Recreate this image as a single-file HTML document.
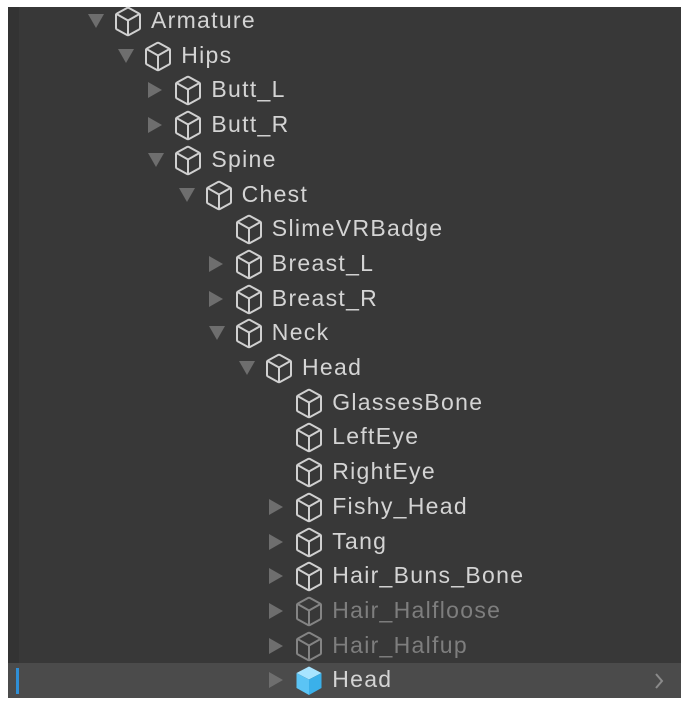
<!DOCTYPE html><html><head><style>
body{margin:0;width:681px;height:707px;background:#fff;overflow:hidden;position:relative;font-family:"Liberation Sans",sans-serif}
#p{position:absolute;left:8px;top:7px;width:673px;height:691px;background:#383838}
#c{position:absolute;left:8px;top:7px;width:11px;height:691px;background:#333}
.r{position:absolute;height:34px;left:0;width:681px}
.t{position:absolute;width:0;height:0}
.d{border-left:8px solid transparent;border-right:8px solid transparent;border-top:14px solid #6e6e6e;top:10px}
.c{border-top:8px solid transparent;border-bottom:8px solid transparent;border-left:14px solid #6e6e6e;top:9px}
svg{position:absolute;top:2px}
.l{position:absolute;top:1px;font-size:23px;letter-spacing:1.3px;color:#d4d4d4;line-height:30px}
.g .l{color:#7e7e7e}.g svg{opacity:.5}
</style></head><body><div id="p"></div><div id="c"></div>
<div style="position:absolute;top:663px;background:#4b4b4b;left:8px;width:673px;height:35px"></div>
<div style="position:absolute;left:16px;top:668px;width:3px;height:26px;background:#2f8fd6"></div>
<svg style="position:absolute;left:654px;top:672px" width="10" height="18" viewBox="0 0 10 18"><path d="M2 2 L8 9 L2 16" fill="none" stroke="#8a8a8a" stroke-width="2"/></svg>
<div id="rows"></div>
<script>
const rows=[[0,'d','Armature'],[1,'d','Hips'],[2,'c','Butt_L'],[2,'c','Butt_R'],[2,'d','Spine'],[3,'d','Chest'],[4,'','SlimeVRBadge'],[4,'c','Breast_L'],[4,'c','Breast_R'],[4,'d','Neck'],[5,'d','Head'],[6,'','GlassesBone'],[6,'','LeftEye'],[6,'','RightEye'],[6,'c','Fishy_Head'],[6,'c','Tang'],[6,'c','Hair_Buns_Bone'],[6,'c','Hair_Halfloose',1],[6,'c','Hair_Halfup',1],[6,'c','Head',0,1]];
const cube='<path d="M15 2 Q16 1.5 17 2 L27 7.5 Q28 8 28 9 L28 22 Q28 23 27 23.5 L17 29 Q16 29.5 15 29 L5 23.5 Q4 23 4 22 L4 9 Q4 8 5 7.5 Z M4.5 8 L16 14.5 L27.5 8 M16 14.5 L16 29" fill="none" stroke="#d0d0d0" stroke-width="2" stroke-linejoin="round"/>';
const blue='<path d="M16 1.5 L28.5 8 L16 14.5 L3.5 8 Z" fill="#a8e4ff"/><path d="M3.5 8 L16 14.5 L16 30 L3.5 23 Z" fill="#5bc4f5"/><path d="M28.5 8 L16 14.5 L16 30 L28.5 23 Z" fill="#3ab0ea"/>';
let h='';rows.forEach((r,i)=>{const y=4+i*34.7,x=30.2*r[0];
h+=`<div class="r${r[3]?' g':''}" style="top:${y}px">`;
if(r[1]=='d')h+=`<div class="t d" style="left:${88+x}px"></div>`;
if(r[1]=='c')h+=`<div class="t c" style="left:${88+x}px"></div>`;
h+=`<svg style="left:${112+x}px" width="32" height="31" viewBox="0 0 32 31">${r[4]?blue:cube}</svg>`;
h+=`<div class="l" style="left:${151+x}px">${r[2]}</div></div>`;});
document.getElementById('rows').innerHTML=h;
</script></body></html>
